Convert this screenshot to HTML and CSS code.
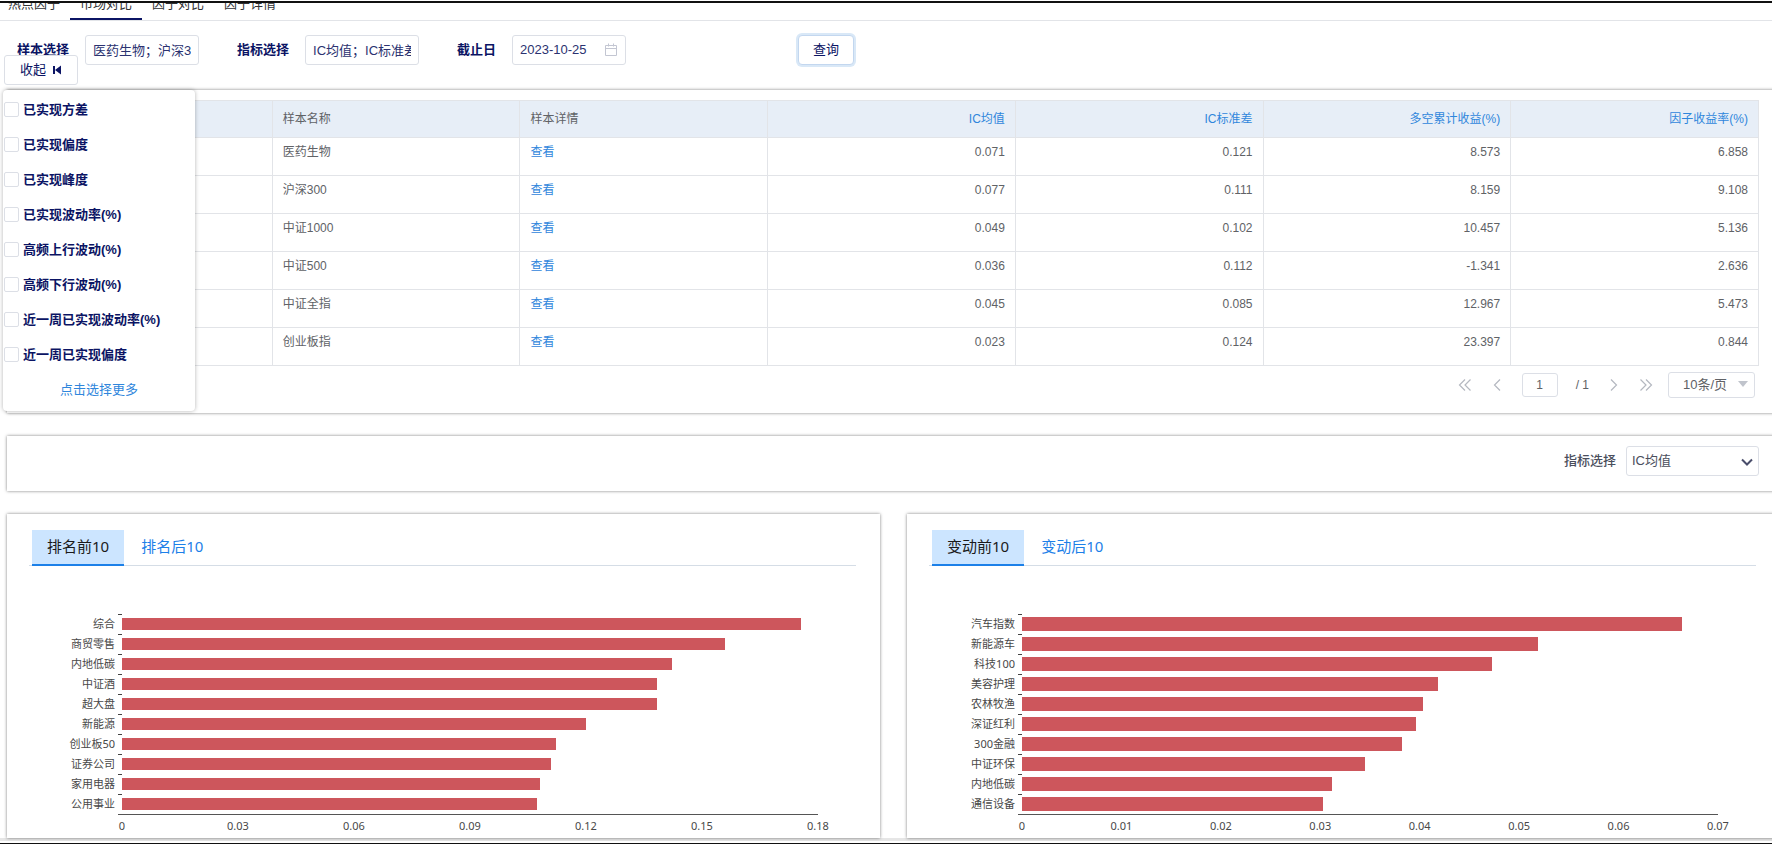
FILE: index.html
```html
<!DOCTYPE html>
<html lang="zh-CN">
<head>
<meta charset="utf-8">
<title>市场对比</title>
<link rel="stylesheet" href="styles.css">
</head>
<body>
<div class="page">
  <nav class="top-tabs">
    <a class="top-tab" href="#">热点因子</a>
    <a class="top-tab active" href="#">市场对比</a>
    <a class="top-tab" href="#">因子对比</a>
    <a class="top-tab" href="#">因子详情</a>
  </nav>

  <form class="filters">
    <div class="field"><label for="sample">样本选择</label><input class="box" id="sample" type="text" value="医药生物；沪深300；中证1000"></div>
    <div class="field"><label for="metric">指标选择</label><input class="box" id="metric" type="text" value="IC均值；IC标准差；多空累计收益"></div>
    <div class="field"><label for="date">截止日</label>
      <span class="date-wrap"><input class="box" id="date" type="text" value="2023-10-25">
        <svg class="calendar" viewBox="0 0 14 14" width="14" height="14" fill="none" stroke="#c3c6d2"><path d="M1.500 2.500h11v10h-11zM1.500 5.500h11M4.500 0.500v3M9.500 0.500v3"/></svg>
      </span>
    </div>
    <button class="query" type="button">查询</button>
    <div class="picker">
      <button class="collapse" type="button">收起
        <svg viewBox="0 0 10 10" width="10" height="10" fill="#0b1464"><path d="M1 1h2v8H1zM9 .5v9L3 5z"/></svg>
      </button>
      <div class="picker-list">
        <label><input type="checkbox">已实现方差</label>
        <label><input type="checkbox">已实现偏度</label>
        <label><input type="checkbox">已实现峰度</label>
        <label><input type="checkbox">已实现波动率(%)</label>
        <label><input type="checkbox">高频上行波动(%)</label>
        <label><input type="checkbox">高频下行波动(%)</label>
        <label><input type="checkbox">近一周已实现波动率(%)</label>
        <label><input type="checkbox">近一周已实现偏度</label>
        <a href="#">点击选择更多</a>
      </div>
    </div>
  </form>

  <main class="content">
    <section class="card table-card">
      <table class="data">
        <thead>
          <tr><th></th><th>样本名称</th><th>样本详情</th><th class="num">IC均值</th><th class="num">IC标准差</th><th class="num">多空累计收益(%)</th><th class="num">因子收益率(%)</th></tr>
        </thead>
        <tbody>
          <tr><td></td><td>医药生物</td><td><a href="#">查看</a></td><td class="num">0.071</td><td class="num">0.121</td><td class="num">8.573</td><td class="num">6.858</td></tr>
          <tr><td></td><td>沪深300</td><td><a href="#">查看</a></td><td class="num">0.077</td><td class="num">0.111</td><td class="num">8.159</td><td class="num">9.108</td></tr>
          <tr><td></td><td>中证1000</td><td><a href="#">查看</a></td><td class="num">0.049</td><td class="num">0.102</td><td class="num">10.457</td><td class="num">5.136</td></tr>
          <tr><td></td><td>中证500</td><td><a href="#">查看</a></td><td class="num">0.036</td><td class="num">0.112</td><td class="num">-1.341</td><td class="num">2.636</td></tr>
          <tr><td></td><td>中证全指</td><td><a href="#">查看</a></td><td class="num">0.045</td><td class="num">0.085</td><td class="num">12.967</td><td class="num">5.473</td></tr>
          <tr><td></td><td>创业板指</td><td><a href="#">查看</a></td><td class="num">0.023</td><td class="num">0.124</td><td class="num">23.397</td><td class="num">0.844</td></tr>
        </tbody>
      </table>
      <div class="pager">
        <button type="button" aria-label="首页"><svg viewBox="0 0 14 12" width="14" height="12"><path d="M7 .5L1.500 6 7 11.500M12.500.5L7 6l5.500 5.500"/></svg></button>
        <button type="button" aria-label="上一页"><svg viewBox="0 0 14 12" width="14" height="12"><path d="M10 .5L4.500 6l5.500 5.500"/></svg></button>
        <input type="text" value="1" aria-label="页码">
        <span class="total">/ 1</span>
        <button type="button" aria-label="下一页"><svg viewBox="0 0 14 12" width="14" height="12"><path d="M4 .5L9.500 6 4 11.500"/></svg></button>
        <button type="button" aria-label="末页"><svg viewBox="0 0 14 12" width="14" height="12"><path d="M1.500.5L7 6l-5.500 5.500M7 .5L12.500 6 7 11.500"/></svg></button>
        <span class="select-wrap size"><select aria-label="每页条数"><option>10条/页</option></select><svg class="arrow" viewBox="0 0 10 6" width="10" height="6" fill="#c0c4cc"><path d="M0 0h10L5 6z"/></svg></span>
      </div>
    </section>

    <section class="card metric-card">
      <label for="chart-metric">指标选择</label>
      <span class="select-wrap metric"><select id="chart-metric"><option>IC均值</option></select><svg class="arrow" viewBox="0 0 12 8" width="12" height="8" fill="none" stroke="#4a4e6b" stroke-width="2"><path d="M1 1.500l5 5 5-5"/></svg></span>
    </section>

    <div class="charts">
      <section class="card chart-card">
        <div class="tabs"><button type="button" class="active">排名前10</button><button type="button">排名后10</button></div>
        <div class="chart">
          <div class="row"><span class="name">综合</span><div class="plot"><div class="bar" style="width:97.6%"></div></div></div>
          <div class="row"><span class="name">商贸零售</span><div class="plot"><div class="bar" style="width:86.7%"></div></div></div>
          <div class="row"><span class="name">内地低碳</span><div class="plot"><div class="bar" style="width:79%"></div></div></div>
          <div class="row"><span class="name">中证酒</span><div class="plot"><div class="bar" style="width:76.8%"></div></div></div>
          <div class="row"><span class="name">超大盘</span><div class="plot"><div class="bar" style="width:76.8%"></div></div></div>
          <div class="row"><span class="name">新能源</span><div class="plot"><div class="bar" style="width:66.7%"></div></div></div>
          <div class="row"><span class="name">创业板50</span><div class="plot"><div class="bar" style="width:62.4%"></div></div></div>
          <div class="row"><span class="name">证券公司</span><div class="plot"><div class="bar" style="width:61.6%"></div></div></div>
          <div class="row"><span class="name">家用电器</span><div class="plot"><div class="bar" style="width:60%"></div></div></div>
          <div class="row"><span class="name">公用事业</span><div class="plot"><div class="bar" style="width:59.6%"></div></div></div>
          <div class="axis"><span>0</span><span>0.03</span><span>0.06</span><span>0.09</span><span>0.12</span><span>0.15</span><span>0.18</span></div>
        </div>
      </section>
      <section class="card chart-card">
        <div class="tabs"><button type="button" class="active">变动前10</button><button type="button">变动后10</button></div>
        <div class="chart thick">
          <div class="row"><span class="name">汽车指数</span><div class="plot"><div class="bar" style="width:94.8%"></div></div></div>
          <div class="row"><span class="name">新能源车</span><div class="plot"><div class="bar" style="width:74.1%"></div></div></div>
          <div class="row"><span class="name">科技100</span><div class="plot"><div class="bar" style="width:67.6%"></div></div></div>
          <div class="row"><span class="name">美容护理</span><div class="plot"><div class="bar" style="width:59.7%"></div></div></div>
          <div class="row"><span class="name">农林牧渔</span><div class="plot"><div class="bar" style="width:57.6%"></div></div></div>
          <div class="row"><span class="name">深证红利</span><div class="plot"><div class="bar" style="width:56.6%"></div></div></div>
          <div class="row"><span class="name">300金融</span><div class="plot"><div class="bar" style="width:54.6%"></div></div></div>
          <div class="row"><span class="name">中证环保</span><div class="plot"><div class="bar" style="width:49.3%"></div></div></div>
          <div class="row"><span class="name">内地低碳</span><div class="plot"><div class="bar" style="width:44.5%"></div></div></div>
          <div class="row"><span class="name">通信设备</span><div class="plot"><div class="bar" style="width:43.3%"></div></div></div>
          <div class="axis"><span>0</span><span>0.01</span><span>0.02</span><span>0.03</span><span>0.04</span><span>0.05</span><span>0.06</span><span>0.07</span></div>
        </div>
      </section>
    </div>
  </main>
  <div class="page-end"></div>
</div>
</body>
</html>
```
FILE: styles.css
```css
* { box-sizing: border-box; }

body {
  margin: 0;
  background: #fff;
  color: #606266;
  font: 12px/18px "Liberation Sans", "Noto Sans CJK SC", sans-serif;
}

a { color: #2f86dc; text-decoration: none; }
button, input, select { margin: 0; font: inherit; color: inherit; }

.page {
  margin-top: 1px;
  border-top: 2px solid #111;
  overflow: hidden;
}

/* Top navigation, scrolled partly out of view */
.top-tabs {
  display: flex;
  align-items: flex-end;
  height: 18px;
  border-bottom: 1px solid #e2e4e8;
  overflow: hidden;
}
.top-tab {
  width: 72px;
  padding-bottom: 5px;
  border-bottom: 2px solid transparent;
  color: #303133;
  font-size: 13px;
  text-align: center;
}
.top-tab.active { border-color: #0b1464; }
.top-tab:first-child { margin-left: -2px; }

/* Filters */
.filters {
  position: relative;
  display: flex;
  align-items: flex-start;
  height: 69px;
  padding: 14px 17px 0;
  color: #0b1464;
  font-size: 13px;
}
.field { display: flex; margin-right: 38px; }
.field label { line-height: 30px; margin-right: 16px; font-weight: 700; }
.box {
  width: 114px;
  height: 30px;
  padding: 0 7px 1px;
  border: 1px solid #dcdfe6;
  border-radius: 3px;
  background: #fff;
  color: #2b3270;
}
.date-wrap { position: relative; }
.calendar { position: absolute; top: 8px; right: 8px; }
.query {
  width: 56px;
  height: 30px;
  margin-left: 134px;
  padding: 0;
  border: 1px solid #c3d7ef;
  border-radius: 4px;
  background: #fff;
  box-shadow: 0 0 0 2px #d9e8f7;
}

/* Factor picker floating over the table */
.picker { position: absolute; z-index: 2; left: 3px; top: 34px; width: 192px; }
.collapse {
  display: flex;
  align-items: center;
  justify-content: center;
  gap: 6px;
  width: 74px;
  height: 30px;
  margin: 0 1px 5px;
  padding: 0;
  border: 1px solid #dcdfe6;
  border-radius: 3px;
  background: #fff;
}
.picker-list {
  display: flex;
  flex-direction: column;
  padding: 2px 1px 4px;
  border-radius: 4px;
  background: #fff;
  box-shadow: 0 0 4px rgba(0, 0, 0, .3);
  line-height: 35px;
}
.picker-list label { display: flex; align-items: center; gap: 4px; font-weight: 700; }
.picker-list input {
  appearance: none;
  width: 15px;
  height: 15px;
  border: 1px solid #dcdfe6;
  border-radius: 2px;
}
.picker-list a { text-align: center; }

/* Cards run past the right edge of the window */
.content { margin: 0 -8px 0 7px; }
.card { background: #fff; box-shadow: 0 0 3px rgba(0, 0, 0, .5); }

.table-card { padding: 10px 21px 15px 17px; }
.data { width: 100%; border-collapse: collapse; table-layout: fixed; }
.data th, .data td {
  height: 38px;
  padding: 5px 10px;
  border: 1px solid #e2e4e8;
  font-weight: 400;
  text-align: left;
  vertical-align: top;
}
.data th { height: 37px; background: #e7eef7; vertical-align: middle; }
.data .num { text-align: right; }
.data th.num { color: #2f86dc; }

.pager {
  display: flex;
  align-items: center;
  justify-content: flex-end;
  gap: 18px;
  margin-top: 6px;
  padding-right: 4px;
}
.pager button { display: flex; padding: 0; border: 0; background: none; }
.pager button svg { fill: none; stroke: #b4b8c0; stroke-width: 1.2; }
.pager input {
  width: 36px;
  height: 24px;
  padding: 0;
  border: 1px solid #dcdfe6;
  border-radius: 3px;
  text-align: center;
}

.select-wrap { position: relative; display: flex; }
.select-wrap select {
  appearance: none;
  width: 100%;
  border: 1px solid #dcdfe6;
  border-radius: 3px;
  background: #fff;
}
.arrow { position: absolute; pointer-events: none; }
.size { width: 87px; margin-left: -3px; }
.size select { height: 26px; padding: 0 14px; font-size: 13px; }
.size .arrow { top: 9px; right: 7px; }

.metric-card {
  display: flex;
  align-items: center;
  justify-content: flex-end;
  gap: 10px;
  height: 55px;
  margin-top: 23px;
  padding: 0 21px 5px;
  color: #4a4e5c;
  font-size: 13px;
}
.metric-card label { font-weight: 500; }
.metric { width: 133px; }
.metric select { height: 30px; padding: 0 5px; }
.metric .arrow { top: 12px; right: 6px; }

/* Charts */
.charts {
  display: grid;
  grid-template-columns: 1fr 1fr;
  gap: 27px;
  margin-top: 23px;
}
.chart-card { height: 324px; padding: 16px 24px 0 22px; }
.tabs {
  display: flex;
  gap: 2px;
  padding-left: 3px;
  border-bottom: 1px solid #d5dde6;
  font: 15px/20px "Noto Sans", "Noto Sans CJK SC", sans-serif;
}
.tabs button {
  height: 36px;
  margin-bottom: -1px;
  padding: 0 15px 2px;
  border: 0;
  border-bottom: 2px solid transparent;
  background: none;
  color: #1c80e8;
}
.tabs .active { background: #cce5ff; border-color: #1c80e8; color: #1a1a1a; }
.chart {
  margin: 48px 38px 0 93px;
  color: #484848;
  font: 11px/16px "Noto Sans", "Noto Sans CJK SC", sans-serif;
}
.row {
  display: grid;
  grid-template-columns: 72px 4px 1fr;
  column-gap: 0;
  height: 20px;
  margin-left: -80px;
  padding-left: 4px;
}
.row::after {
  content: "";
  grid-column: 2;
  grid-row: 1;
  height: 1px;
  background: #444;
}
.name { grid-column: 1; grid-row: 1; padding-right: 3px; line-height: 19px; text-align: right; white-space: nowrap; }
.plot { grid-column: 3; grid-row: 1; align-self: center; }
.bar { height: 12px; background: #cd565c; }
.thick .bar { height: 14px; }
.axis {
  display: flex;
  justify-content: space-between;
  margin: 0 -20px;
  padding-top: 4px;
  text-align: center;
  background: linear-gradient(#555, #555) 16px 0 / calc(100% - 36px) 1px no-repeat;
}
.axis span { width: 40px; }

.page-end { height: 6px; border-top: 3px solid #e6e6e6; border-bottom: 1px solid #111; }
```
